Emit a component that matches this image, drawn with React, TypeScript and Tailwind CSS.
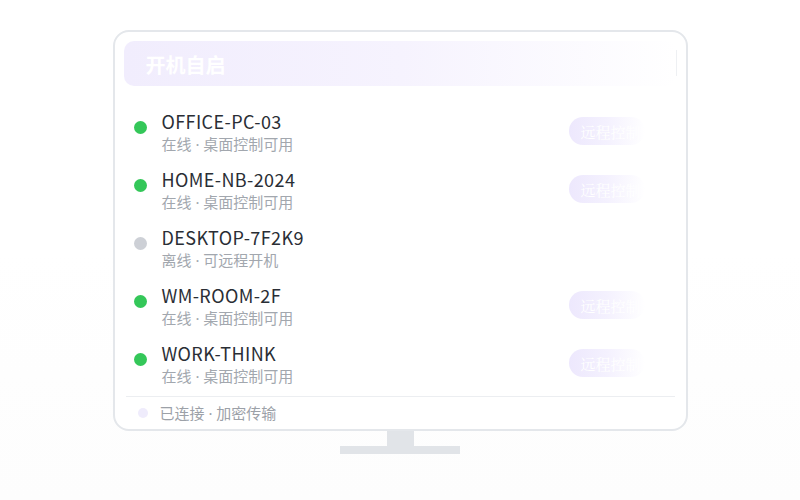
const devices = [
  { name: 'OFFICE-PC-03', online: true, note: '在线 · 桌面控制可用' },
  { name: 'HOME-NB-2024', online: true, note: '在线 · 桌面控制可用' },
  { name: 'DESKTOP-7F2K9', online: false, note: '离线 · 可远程开机' },
  { name: 'WM-ROOM-2F', online: true, note: '在线 · 桌面控制可用' },
  { name: 'WORK-THINK', online: true, note: '在线 · 桌面控制可用' },
];

const cjk = { fontFamily: '"Noto Sans CJK SC", "Noto Sans", sans-serif' };
const mixed = { fontFamily: '"Noto Sans", "Noto Sans CJK SC", sans-serif' };

export default function App() {
  return (
    <div className="w-[800px] h-[500px] bg-gradient-to-b from-white from-50% to-[#fdfdfd] flex flex-col items-center pt-[30px]" style={cjk}>
      {/* monitor */}
      <div className="w-[575px] h-[401px] shrink-0 border-2 border-[#e4e7eb] rounded-[16px] p-[9px] flex flex-col bg-white">
        <div className="h-[45px] shrink-0 rounded-[10px] bg-gradient-to-r from-[#f1edfd] via-[#f6f3fe] to-white flex items-center pl-[22px] relative">
          <span className="text-white text-[20px] font-bold leading-none mt-[2px]">开机自启</span>
          <div className="absolute right-0 top-[9px] h-[26px] w-px bg-[#eef0f3]" />
        </div>

        <div className="flex flex-col gap-[15px] mt-[25px]">
          {devices.map((d) => (
            <div key={d.name} className="flex items-start">
              <div
                className={
                  'ml-[10px] mt-[10px] w-[13px] h-[13px] rounded-full shrink-0 ' +
                  (d.online ? 'bg-[#34c759]' : 'bg-[#cdd0d6]')
                }
              />
              <div className="ml-[15px] flex flex-col">
                <span className="text-[18px] leading-[22px] text-[#2a2e35] tracking-[0.4px] -mt-px">{d.name}</span>
                <span className="text-[15px] leading-[20px] mt-[2px] text-[#a2a7ae]" style={mixed}>{d.note}</span>
              </div>
              {d.online && (
                <div className="ml-auto mr-[32px] mt-[6px] w-[76px] h-[28px] rounded-full bg-gradient-to-r from-[#ede8fd] via-[#f4f1fe] to-white flex items-center pl-[12px]">
                  <span className="text-white text-[15px] leading-none" style={{ fontFamily: '"Noto Serif CJK SC", "Noto Sans CJK SC", serif' }}>远程控制</span>
                </div>
              )}
            </div>
          ))}
        </div>

        <div className="mt-[10px] mx-[2px] h-px shrink-0 bg-[#eceef1]" />
        <div className="flex items-center h-[32px] shrink-0">
          <div className="ml-[14px] w-[10px] h-[10px] rounded-full bg-[#efecfc]" />
          <span className="ml-[12px] text-[15px] text-[#9ca1a8]" style={mixed}>已连接 · 加密传输</span>
        </div>
      </div>
      {/* stand */}
      <div className="w-[27px] h-[15px] bg-[#e1e4e8]" />
      <div className="w-[120px] h-[8px] bg-[#e1e4e8]" />
    </div>
  );
}
